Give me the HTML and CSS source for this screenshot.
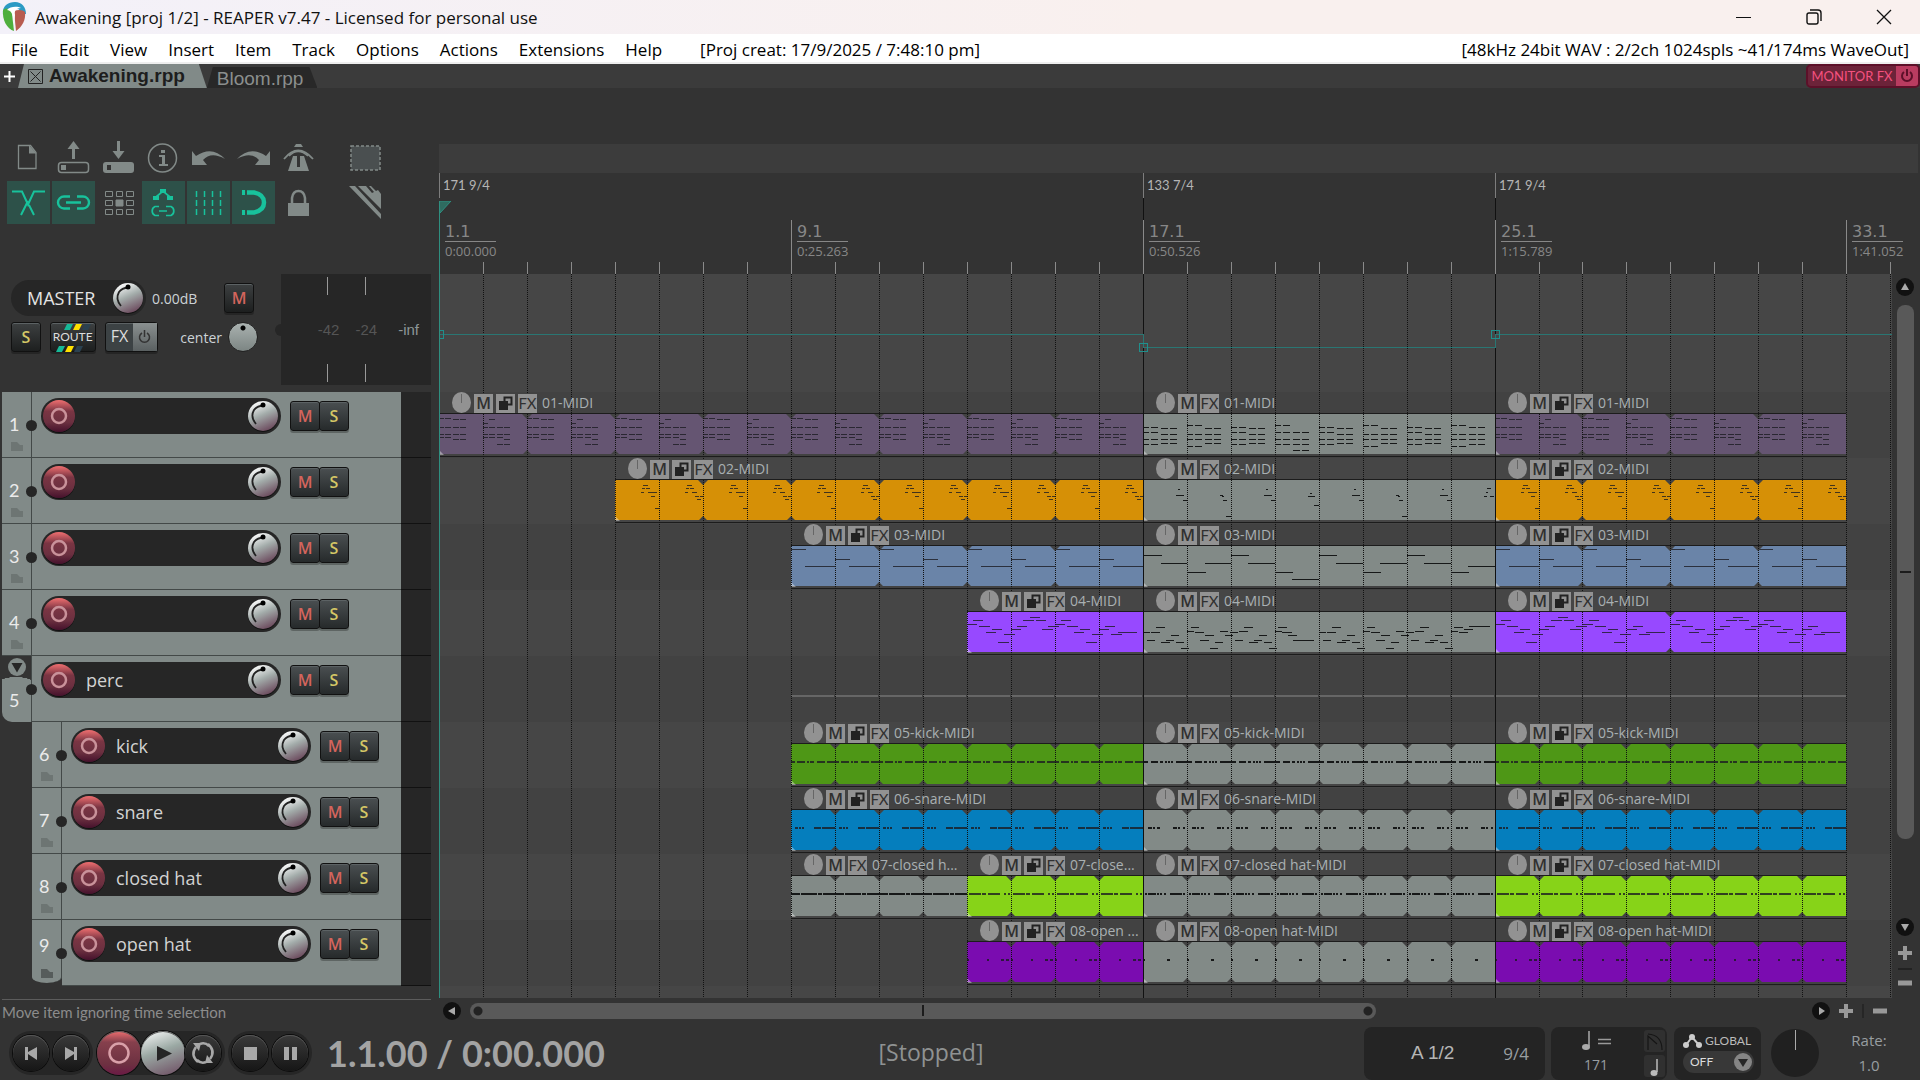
FILE: index.html
```html
<!DOCTYPE html>
<html lang="en">
<head>
<meta charset="utf-8">
<title>Awakening [proj 1/2] - REAPER v7.47</title>
<link rel="stylesheet" href="styles.css">
</head>
<body>
<header class="titlebar">
  <svg class="logo" width="24" height="30" viewBox="0 0 24 30">
    <path d="M1 12C0 4 6 0 13 0c7 0 11 5 11 12l-5 0c0-4-3-6-7-6-5 0-8 3-8 8z" fill="#2b9ac4"/>
    <path d="M1 8c4-3 8-1 9 4l2 17C5 27 0 18 1 8z" fill="#4fae3d"/>
    <path d="M12 9c5-2 9-1 11 1 1 8-3 15-9 19z" fill="#b85c50"/>
    <path d="M5 8c3-4 11-4 14-2-5 0-7 3-6 7l-1 9c-1-8-1-13-7-14z" fill="#fff"/>
  </svg>
  <h1>Awakening [proj 1/2] - REAPER v7.47 - Licensed for personal use</h1>
  <div class="window-buttons">
    <button aria-label="Minimize"><svg width="16" height="16"><path d="M0 8.5h15" stroke="#111"/></svg></button>
    <button aria-label="Restore"><svg width="16" height="16" fill="none" stroke="#111" stroke-width="1.4"><rect x="1" y="4" width="11" height="11" rx="2"/><path d="M4 1h8q3 0 3 3v8"/></svg></button>
    <button aria-label="Close"><svg width="16" height="16"><path d="M1 1l14 14M15 1L1 15" stroke="#111" stroke-width="1.3"/></svg></button>
  </div>
</header>
<nav class="menubar">
  <a href="#">File</a><a href="#">Edit</a><a href="#">View</a><a href="#">Insert</a><a href="#">Item</a><a href="#">Track</a><a href="#">Options</a><a href="#">Actions</a><a href="#">Extensions</a><a href="#">Help</a>
  <span class="created">[Proj creat: 17/9/2025 / 7:48:10 pm]</span>
  <span class="audio">[48kHz 24bit WAV : 2/2ch 1024spls ~41/174ms WaveOut]</span>
</nav>
<div class="tabbar">
  <button class="tab-add" aria-label="New tab"><svg width="11" height="11"><path d="M5.5 0v11M0 5.500h11" stroke="#fff" stroke-width="2"/></svg></button>
  <button class="tab tab-active"><svg width="15" height="15" fill="none" stroke="#222"><path d="M.5.5h14v14H.5zM2.500 2.500l10 10M12.500 2.500l-10 10"/></svg>Awakening.rpp</button>
  <button class="tab">Bloom.rpp</button>
  <button class="monitor-fx"><span>MONITOR FX</span><svg width="22" height="20" fill="none" stroke="#5c1029" stroke-width="2"><path d="M8 6a5 5 0 1 0 6 0M11 3v7"/></svg></button>
</div>
<main>
  <section class="side">
    <div class="toolbar">
      <button aria-label="New project"><svg class="icon"><path d="M11.500 9.500h12l5.500 7v16H11.500z" fill="none" stroke="currentColor" stroke-width="1.300"/><path d="M22 9l7.500 8.500H22z" fill="currentColor"/></svg></button>
      <button aria-label="Open project"><svg class="icon"><path d="M21.500 5l6 8h-4.500v10h-3V13h-4.500z" fill="currentColor"/><rect x="6.500" y="26.500" width="30" height="10" rx="3" fill="none" stroke="currentColor" stroke-width="1.500"/><path d="M9 29h5v5H9z" fill="currentColor"/></svg></button>
      <button aria-label="Save project"><svg class="icon"><path d="M21.500 23l6-8h-4.500V5h-3v10h-4.500z" fill="currentColor"/><rect x="6" y="26" width="31" height="11" rx="3" fill="currentColor"/><path d="M10 29h4v5h-4z" fill="#333"/></svg></button>
      <button aria-label="Project settings"><svg class="icon"><circle cx="20.500" cy="22" r="14" fill="none" stroke="currentColor" stroke-width="1.500"/><path d="M19 14h4v3h-4zM17 19h6v9h3v2h-9v-2h3v-7h-3z" fill="currentColor"/></svg></button>
      <button aria-label="Undo"><svg class="icon"><path d="M5 15l4 5q16-11 29 3-14-8-22 1l4 5H5z" fill="currentColor"/></svg></button>
      <button aria-label="Redo"><svg class="icon"><path d="M38 15l-4 5Q18 9 5 23q14-8 22 1l-4 5h15z" fill="currentColor"/></svg></button>
      <button aria-label="Metronome"><svg class="icon"><path d="M19 8h5l2 3h-9zM16 20h4v11h3V20h4l5 15H11z" fill="currentColor"/><path d="M7 23q14-17 29 0" fill="none" stroke="currentColor" stroke-width="1.800"/><path d="M12 20q9-9 19 0" fill="none" stroke="currentColor" stroke-width="1.500"/></svg></button>
      <button class="apart" aria-label="Marquee"><svg class="icon"><rect x="7" y="10" width="29" height="24" fill="#4a4f50" stroke="currentColor" stroke-width="1.500" stroke-dasharray="3 2"/></svg></button>
      <button class="on" aria-label="Auto crossfade"><svg class="icon"><path d="M5 10.500h10l6 13 6-13h11M21 20L14 34M22 24l5 10" fill="none" stroke="currentColor" stroke-width="2"/></svg></button>
      <button class="on" aria-label="Grouping"><svg class="icon"><path d="M18 15.500h-6a6 6 0 0 0 0 12h6M25 15.500h6a6 6 0 0 1 0 12h-6M14 21.500h15" fill="none" stroke="currentColor" stroke-width="2.400"/></svg></button>
      <button aria-label="Ripple editing"><svg class="icon" fill="none" stroke="currentColor"><path d="M8.500 10.500h7v5h-7zM19.500 10.500h6v5h-6zM29.500 10.500h7v5h-7zM8.500 19.500h7v5h-7zM29.500 19.500h7v5h-7zM8.500 28.500h7v5h-7zM19.500 28.500h6v5h-6zM29.500 28.500h7v5h-7z"/><path d="M19 19h7v6h-7z" fill="currentColor"/></svg></button>
      <button class="on" aria-label="Envelope move"><svg class="icon"><path d="M17 25.500h-4a5 5 0 0 0 0 9h4M24 25.500h5a5 5 0 0 1 0 9h-5M17 30h8M14 16l7-6 7 6" fill="none" stroke="currentColor" stroke-width="1.700"/><path d="M18 8h6v4h-6zM11 15h6v4h-6zM25 15h6v4h-6z" fill="currentColor"/></svg></button>
      <button class="on" aria-label="Grid"><svg class="icon"><path d="M9.500 10v26M17.500 10v26M25.500 10v26M33.500 10v26" stroke="currentColor" stroke-width="1.500" stroke-dasharray="6 3"/></svg></button>
      <button class="on" aria-label="Snap"><svg class="icon"><path d="M15 11.500h7q10 2 10 10t-10 10h-7" fill="none" stroke="currentColor" stroke-width="4.500"/><path d="M10 9h3v5h-3zM10 29h3v5h-3z" fill="currentColor"/></svg></button>
      <button aria-label="Lock"><svg class="icon"><path d="M11 22h21v13H11z" fill="currentColor"/><path d="M15 22v-5q1-7 6.500-7t6.500 7v5" fill="none" stroke="currentColor" stroke-width="2.500"/></svg></button>
      <button class="apart" aria-label="Razor edit"><svg class="icon"><path d="M5 5h6l26 28v5zM14 5h8l6 7 2-1-5-6h2l5 5 2-1 3 4v15z" fill="currentColor"/></svg></button>
    </div>
    <div class="master">
      <div class="master-controls">
        <div class="master-row">
          <div class="master-pill"><span>MASTER</span><input type="range" class="knob" aria-label="Master volume"></div>
          <span class="db">0.00dB</span>
          <button class="key mute push">M</button>
        </div>
        <div class="master-row">
          <button class="key solo">S</button>
          <button class="key route"><svg width="45" height="29"><g><path d="M16 1h6l-3 6h-6z" fill="#16b998"/><path d="M25 1h6l-3 6h-6z" fill="#ffe000"/><path d="M34 1h6l-3 6h-6z" fill="#2b4150"/><path d="M8 23h6l-3 6H5z" fill="#16b998"/><path d="M17 23h6l-3 6h-6z" fill="#ffe000"/><path d="M26 23h6l-3 6h-6z" fill="#2b4150"/></g></svg><span>ROUTE</span></button>
          <button class="key fx"><span>FX</span><svg width="24" height="28" fill="none" stroke="#333" stroke-width="1.500"><path d="M9 10a5 5 0 1 0 5 0M11.500 7v7"/></svg></button>
          <span class="pan-label">center</span>
          <input type="range" class="knob pan" aria-label="Master pan">
        </div>
      </div>
      <div class="meter"><span>-42</span><span>-24</span><span class="inf">-inf</span></div>
    </div>
    <div class="tracks" id="tracks"></div>
    <p class="status">Move item ignoring time selection</p>
  </section>
  <section class="timeline">
    <div class="regions"></div>
    <div class="ruler" id="ruler"></div>
    <div class="arrange-row">
      <div class="arrange" id="arrange">
        <div class="master-lane"></div>
      </div>
      <div class="vscroll">
        <button class="arrow" aria-label="Scroll up"><svg width="18" height="18"><path d="M9 5l4 7H5z" fill="#aaa"/></svg></button>
        <div class="vthumb"></div>
        <button class="arrow" aria-label="Scroll down"><svg width="18" height="18"><path d="M9 13l4-7H5z" fill="#aaa"/></svg></button>
        <button class="zoom" aria-label="Zoom in vertically"><svg width="14" height="14"><path d="M7 0v14M0 7h14" stroke="#999" stroke-width="4"/></svg></button>
        <i></i>
        <button class="zoom" aria-label="Zoom out vertically"><svg width="14" height="6"><path d="M0 3h14" stroke="#999" stroke-width="5"/></svg></button>
      </div>
    </div>
    <div class="hscroll">
      <button class="arrow" aria-label="Scroll left"><svg width="18" height="18"><path d="M5 9l7-4v8z" fill="#aaa"/></svg></button>
      <div class="htrack"><div class="hthumb"></div></div>
      <button class="arrow" aria-label="Scroll right"><svg width="18" height="18"><path d="M13 9L7 5v8z" fill="#aaa"/></svg></button>
      <button class="zoom" aria-label="Zoom in"><svg width="14" height="14"><path d="M7 0v14M0 7h14" stroke="#999" stroke-width="4"/></svg></button>
      <i></i>
      <button class="zoom" aria-label="Zoom out"><svg width="14" height="14"><path d="M0 7h14" stroke="#999" stroke-width="5"/></svg></button>
    </div>
  </section>
</main>
<footer class="transport">
  <div class="group">
    <button class="round" aria-label="Go to start"><svg viewBox="0 0 36 36"><path d="M12 12h3v5l9-5v13l-9-6v6h-3z" fill="#a8a8a8"/></svg></button>
    <button class="round" aria-label="Go to end"><svg viewBox="0 0 36 36"><path d="M24 12h-3v5l-9-5v13l9-6v6h3z" fill="#a8a8a8"/></svg></button>
  </div>
  <div class="group middle">
    <button class="round big record" aria-label="Record"><svg viewBox="0 0 44 44"><circle cx="22" cy="22" r="9.500" fill="none" stroke="#d9a0a9" stroke-width="2.500"/></svg></button>
    <button class="round big play" aria-label="Play"><svg viewBox="0 0 44 44"><path d="M16 15l15 7.500L16 30z" fill="#262626"/></svg></button>
    <button class="round" aria-label="Repeat"><svg viewBox="0 0 36 36"><path d="M11 12q-6 8 2 15M25 24q6-8-2-15M15 9q5-2 9 2M21 27q-5 2-9-2" fill="none" stroke="#a8a8a8" stroke-width="2.500"/><path d="M8 8h8l-2 8zM28 28h-8l2-8z" fill="#a8a8a8"/></svg></button>
  </div>
  <div class="group">
    <button class="round" aria-label="Stop"><svg viewBox="0 0 36 36"><path d="M12 12h13v13H12z" fill="#a8a8a8"/></svg></button>
    <button class="round" aria-label="Pause"><svg viewBox="0 0 36 36"><path d="M12 12h5v13h-5zM20 12h5v13h-5z" fill="#a8a8a8"/></svg></button>
  </div>
  <span class="time">1.1.00 / 0:00.000</span>
  <span class="state">[Stopped]</span>
  <div class="panels">
    <div class="selection"><span class="sel">A 1/2</span><span class="sig">9/4</span></div>
    <div class="tempo">
      <div class="tempo-value">
        <svg width="30" height="22"><path d="M8 1v15" stroke="#aaa" stroke-width="1.500"/><ellipse cx="5" cy="17" rx="4" ry="3" fill="#aaa"/><path d="M17 9.500h13M17 13.500h13" stroke="#999" stroke-width="1.500"/></svg>
        <span>171</span>
      </div>
      <div class="tempo-keys">
        <button aria-label="Tap"><svg width="21" height="22" fill="none" stroke="#151515" stroke-width="1.200"><path d="M4 20V6l9 8M4 4q14 1 14 16"/></svg></button>
        <button aria-label="Note"><svg width="21" height="22"><path d="M13 4v13" stroke="#bbb" stroke-width="1.500"/><ellipse cx="10" cy="18" rx="3.500" ry="3" fill="#bbb"/></svg></button>
      </div>
    </div>
    <div class="global">
      <div class="global-head"><svg width="20" height="14"><path d="M3 11l6-8 7 8" fill="none" stroke="#ccc" stroke-width="2"/><circle cx="3" cy="11" r="3" fill="#ccc"/><circle cx="9" cy="3" r="3" fill="#ccc"/><circle cx="16" cy="11" r="3" fill="#ccc"/></svg><span>GLOBAL</span></div>
      <button class="off"><span>OFF</span><svg width="18" height="18"><circle cx="9" cy="9" r="9" fill="#858585"/><path d="M4 6h10l-5 8z" fill="#262626"/></svg></button>
    </div>
    <div class="dial"></div>
    <div class="rate"><span>Rate:</span><span>1.0</span></div>
  </div>
</footer>
<script src="script.js"></script>
</body>
</html>
```
FILE: styles.css
```css
* { box-sizing: border-box; }
body {
  margin: 0;
  min-height: 100vh;
  display: flex;
  flex-direction: column;
  background: #333;
  color: #d0d0d0;
  font-family: "Open Sans", "Noto Sans", sans-serif;
  font-size: 14px;
  overflow: hidden;
}
button { border: 0; padding: 0; margin: 0; background: none; color: inherit; font: inherit; }
svg { display: block; }

/* Title, menu and project tabs */
.titlebar { display: flex; align-items: center; height: 34px; padding: 0 28px 0 2px; gap: 9px; background: linear-gradient(90deg, #f3f1f9, #f9f0ee 60%); color: #111; }
.titlebar h1 { margin: 0; font-size: 17px; font-weight: 400; white-space: nowrap; }
.window-buttons { display: flex; gap: 54px; margin-left: auto; }
.menubar { display: flex; align-items: center; height: 30px; padding: 2px 11px 0; gap: 21px; background: #fff; border-bottom: 2px solid #eee; color: #000; font-size: 17px; white-space: nowrap; }
.menubar a { color: inherit; text-decoration: none; }
.created { margin-left: 17px; }
.audio { margin-left: auto; }
.tabbar { display: flex; align-items: flex-end; height: 24px; background: #3b3b3b; }
.tab-add { align-self: center; margin: 0 3px 0 4px; }
.tab { height: 21px; padding: 0 14px 0 10px; background: #282828; color: #8b8f8e; font: 19px/24px "Liberation Sans", Arial, sans-serif; clip-path: polygon(6px 0, calc(100% - 8px) 0, 100% 100%, 0 100%); overflow: hidden; }
.tab-active { display: flex; align-items: center; gap: 6px; height: 24px; padding-right: 22px; background: #818a88; color: #1d1d1d; font-weight: 700; }
.monitor-fx { display: flex; align-items: center; margin-left: auto; width: 114px; height: 24px; border: 2px solid #5c1029; border-radius: 5px; background: #6c2339; color: #f5517f; font: 13px/20px Lato, sans-serif; white-space: nowrap; overflow: hidden; }
.monitor-fx span { flex: 1; text-align: center; }
.monitor-fx svg { background: #b93c60; }

main { display: flex; flex: 1; min-height: 0; }
.side { display: flex; flex-direction: column; width: 439px; padding-top: 48px; }

.toolbar { display: grid; grid-template-columns: repeat(7, 43px) 67px; gap: 2px; height: 88px; padding-left: 7px; margin-bottom: 50px; color: #828a88; }
.toolbar button { height: 43px; }
.toolbar .apart { padding-left: 22px; }
.toolbar .on { background: #2d5149; color: #18c29c; }
.icon { width: 43px; height: 43px; }

/* Master strip */
.master { display: flex; justify-content: space-between; height: 118px; margin-right: 8px; }
.master-controls { width: 262px; padding: 6px 4px 0 11px; }
.master-row { display: flex; align-items: center; height: 36px; margin-bottom: 3px; }
.master-pill { display: flex; align-items: center; width: 135px; height: 36px; padding: 0 2px 0 16px; border-radius: 18px; background: #262626; color: #e4e4e4; font-size: 18px; }
.master-pill .knob { margin-left: auto; }
.db { margin-left: 6px; color: #ccd2d6; }
.push { margin-left: auto; margin-right: 4px; }
.pan-label { margin-left: 22px; margin-right: 6px; color: #ccd2d6; }
.meter { display: flex; align-items: center; justify-content: flex-end; width: 150px; height: 111px; gap: 16px; padding-right: 12px; font: 15px/20px "Liberation Sans", Arial, sans-serif; color: #555;
  background: linear-gradient(#999, #999) 46px 3px / 1px 18px no-repeat,
    linear-gradient(#999, #999) 84px 3px / 1px 18px no-repeat,
    linear-gradient(#999, #999) 46px 90px / 1px 18px no-repeat,
    linear-gradient(#999, #999) 84px 90px / 1px 18px no-repeat, #262626; }
.meter::before { content: ""; align-self: center; width: 6px; height: 12px; margin: 0 auto 0 -6px; border-radius: 6px 0 0 6px; background: #262626; }
.meter .inf { margin-left: 5px; color: #8d9698; }

.key { width: 30px; height: 30px; border: 1px solid #111; border-radius: 3px; background: linear-gradient(#4a4f51, #262a2b); box-shadow: inset 0 1px #5c6264, 0 2px #0004; font-size: 16px; font-weight: 600; line-height: 26px; text-align: center; }
.mute { color: #d4645c; }
.solo { color: #d5c766; }
.master .key { background: linear-gradient(#3d4041, #1d1f1f); }
.master .route { position: relative; width: 46px; margin: 0 9px; color: #ddd; font: 15px/28px Lato, sans-serif; }
.route svg { position: absolute; left: 0; top: 0; }
.route span { position: relative; display: block; margin: 0 -4px; font-size: 12px; }
.master .fx { display: flex; width: 54px; color: #ddd; font-weight: 400; background: #3c4244; }
.fx span { flex: 1; font-size: 16px; }
.fx svg { background: linear-gradient(#8a9090, #5a6061); }

.knob { appearance: none; flex: none; width: 32px; height: 32px; margin: 0; background: url("data:image/svg+xml,%3Csvg xmlns='http://www.w3.org/2000/svg' viewBox='0 0 32 32'%3E%3Cdefs%3E%3ClinearGradient id='g' x1='.3' y1='0' x2='.75' y2='1'%3E%3Cstop offset='0' stop-color='%23fff'/%3E%3Cstop offset='.45' stop-color='%23a3acaa'/%3E%3Cstop offset='1' stop-color='%23674257'/%3E%3C/linearGradient%3E%3C/defs%3E%3Ccircle cx='16' cy='17' r='15' fill='%23111'/%3E%3Ccircle cx='16' cy='16' r='15' fill='url(%23g)'/%3E%3Cpath d='M9 24Q3 17 7 10Q10 6 16 5.500' fill='none' stroke='%23222' stroke-width='1.800'/%3E%3Ccircle cx='16' cy='5' r='2.500'/%3E%3C/svg%3E"); }
.knob::-webkit-slider-thumb { appearance: none; width: 0; height: 0; }
.pan { width: 30px; height: 30px; border: 1px solid #222; border-radius: 50%; background: radial-gradient(circle at 14px 5px, #000 2px, transparent 3px), linear-gradient(#aab2b0, #7c8583); }

/* Track panel */
.tracks { margin: 0 8px 13px 2px; background: linear-gradient(#262626, #262626) right / 30px 100% no-repeat; }
.track { display: flex; height: 66px; padding-right: 30px; background: linear-gradient(#111, #111) right bottom / 30px 1px no-repeat; }
.track.child { padding-left: 30px; }
.track-index { position: relative; display: flex; flex-direction: column; width: 30px; padding: 20px 0 0 7px; border-right: 1px solid #434948; border-bottom: 1px solid #434948; background: #818a88; color: #ebebeb; font: 18px/24px Lato, sans-serif; }
.track-index::after { content: ""; position: absolute; right: -6px; top: 28px; width: 11px; height: 11px; border-radius: 50%; background: #262626; }
.track-index svg { margin: 6px 0 0 2px; }
.folder .track-index { padding-top: 0; background: radial-gradient(ellipse 22px 10px at 14px 31px, #818a88 99%, transparent), linear-gradient(#818a88, #818a88) 0 28px / 100% 40px no-repeat; border-bottom: 0; border-radius: 0 0 0 10px; }
.folder .track-index svg { margin: 1px 0 11px -1px; }
.last .track-index { height: 63px; padding-top: 13px; border-bottom: 0; border-radius: 0 0 15px 15px / 0 0 6px 6px; }
.last .track-index svg { margin-top: 12px; }
.track-main { display: flex; flex: 1; padding: 6px 0 0 9px; border-bottom: 1px solid #434948; background: #818a88; }
.track-pill { display: flex; align-items: center; width: 240px; height: 36px; padding: 0 2px; border-radius: 18px; background: #262626; }
.track-pill input[type="text"] { flex: 1; min-width: 0; margin-left: 11px; padding: 0; border: 0; background: none; color: #d2d2d2; font: 18px/24px "Open Sans", sans-serif; }
.arm { width: 32px; height: 32px; border-radius: 50%; background: linear-gradient(#f06f70, #7a3543 35%, #6b3040 70%, #45112c); box-shadow: 0 1px #111; }
.arm svg { margin: auto; }
.track .key { margin-top: 3px; }
.track-pill + .key { margin-left: 9px; }
.track .key + .key { margin-left: -1px; }
.status { height: 24px; margin: 0 8px 0 2px; border-top: 1px solid #5c5c5c; color: #8c8c8c; font: 15px/24px Lato, sans-serif; }

/* Timeline */
.timeline { display: flex; flex: 1; flex-direction: column; min-width: 0; padding-top: 56px; }
.regions { height: 29px; margin-right: 2px; background: #3c3c3c; }
.ruler { position: relative; height: 101px; overflow: hidden; }
.tempo-mark, .bar-mark, .tick { position: absolute; }
.tempo-mark { top: 0; height: 25px; padding-left: 3px; border-left: 1px solid #7d7d7d; color: #b5b5b5; font: 13px/25px Lato, sans-serif; white-space: nowrap; }
.bar-mark { top: 47px; height: 54px; padding: 3px 0 0 5px; border-left: 1px solid #8a8a8a; color: #878787; }
.bar-mark b { display: block; border-bottom: 1px solid #878787; font: 16px/18px "DejaVu Sans", sans-serif; }
.bar-mark span { display: block; font-size: 13px; line-height: 18px; }
.tick { bottom: 0; width: 1px; height: 12px; background: #8a8a8a; }
.cursor-head { position: absolute; left: 0; top: 28px; }
.join { position: absolute; top: 25px; width: 1px; height: 22px; background: #111; }
.arrange-row { display: flex; flex: 1; min-height: 0; }
.arrange { position: relative; flex: 1; min-width: 0; overflow: hidden; background: #464646; }
.master-lane { height: 118px; }
.lane { position: relative; height: 66px; }
.lane:nth-child(even) { background: #424242; }
.grid { position: absolute; left: 0; top: 0; z-index: 1; width: 100%; height: 100%; shape-rendering: crispEdges; }
.item { position: absolute; top: 0; height: 65px; border-bottom: 1px solid #1c1c1c; }
.item-head { position: relative; z-index: 2; display: flex; align-items: flex-end; gap: 3px; height: 21px; padding-left: 13px; color: #a9b0b2; white-space: nowrap; overflow: hidden; }
.item-head span { margin-left: 2px; line-height: 21px; }
.item-head button { width: 19px; height: 19px; background: #929292; color: #303030; font-size: 16px; line-height: 19px; font-weight: 600; text-align: center; }
.item-head .item-knob { height: 21px; border-radius: 50%; background: linear-gradient(#666, #666) 9px 2px / 1px 9px no-repeat, #929292; }
.item-head .item-fx { font-family: Lato, sans-serif; font-weight: 400; font-size: 15px; }
.item-body { border-top: 1px solid #1c1c1c; }

.vscroll { display: flex; flex-direction: column; align-items: center; width: 28px; padding: 4px 2px 0 0; }
.arrow { flex: none; width: 18px; height: 18px; border-radius: 50%; background: #111; }
.vthumb { width: 17px; height: 534px; margin: 9px 0 79px; border-radius: 8px; background: linear-gradient(#1c1c1c, #1c1c1c) center / 11px 2px no-repeat, #595959; }
.vscroll .zoom { margin-top: 10px; }
.vscroll i { width: 14px; height: 2px; margin-top: 8px; background: #222; }
.hscroll { display: flex; align-items: center; height: 25px; padding: 0 33px 0 4px; gap: 9px; }
.htrack { flex: 1; }
.hthumb { width: 68%; height: 16px; border-radius: 8px; background: radial-gradient(circle at 8px 8px, #222 4px, transparent 5px), radial-gradient(circle at calc(100% - 8px) 8px, #222 4px, transparent 5px), linear-gradient(#1c1c1c, #1c1c1c) center / 2px 11px no-repeat, #595959; }
.hscroll i { width: 2px; height: 14px; background: #262626; }

/* Transport */
.transport { display: flex; align-items: center; height: 57px; padding: 3px 29px 0 9px; }
.group { display: flex; align-items: center; gap: 4px; height: 44px; padding: 0 4px; border-radius: 22px; background: #262626; }
.group.middle { gap: 0; margin: 0 3px 0 4px; padding: 0 4px 0 0; }
.round { width: 36px; height: 36px; border-radius: 50%; background: linear-gradient(#3a3a3a, #161616); box-shadow: 0 0 0 1px #0c0c0c, inset 0 1px #555; }
.big { width: 44px; height: 44px; }
.record { background: linear-gradient(#f06f70, #86404d 25%, #6d3141 75%, #6b1a45); }
.play { background: linear-gradient(160deg, #fff, #9aa8a3 45%, #6c4a60); }
.time { width: 275px; margin-left: 15px; color: #a3a3a3; font: 700 36px/44px Lato, sans-serif; white-space: nowrap; }
.state { flex: 1; margin-right: 104px; text-align: center; color: #8f9292; font-size: 23px; line-height: 28px; padding-bottom: 3px; }
.panels { display: flex; align-items: center; gap: 6px; }
.selection, .tempo, .global { height: 53px; border-radius: 8px; background: #242424; }
.selection { display: flex; align-items: center; justify-content: space-between; width: 181px; padding: 0 16px 0 47px; color: #989ea1; font-size: 17px; }
.selection .sel { color: #b5b5b5; font: 19px/26px "Liberation Sans", Arial, sans-serif; }
.tempo { display: flex; justify-content: flex-end; width: 116px; padding: 3px 2px 3px 0; gap: 32px; }
.tempo-value { display: flex; flex-direction: column; align-items: center; width: 32px; gap: 2px; color: #989ea1; font-size: 14px; line-height: 22px; }
.tempo-keys { display: flex; flex-direction: column; gap: 3px; }
.tempo-keys button { height: 22px; background: #303030; border-radius: 3px; }
.global { width: 87px; margin-left: 1px; padding: 4px 7px 0 9px; color: #bbb; font: 12px/20px Lato, sans-serif; }
.global-head { display: flex; align-items: center; gap: 2px; }
.off { display: flex; align-items: center; justify-content: space-between; width: 71px; height: 22px; padding: 0 2px 0 7px; border-radius: 11px; background: #383838; color: #ddd; font-size: 12px; }
.dial { width: 48px; height: 48px; margin: 0 22px 0 4px; border-radius: 50%; background: linear-gradient(#aaa, #aaa) center 1px / 1px 20px no-repeat, #202020; }
.rate { display: flex; flex-direction: column; align-items: center; width: 44px; color: #989ea1; line-height: 25px; font-size: 15px; }
```
FILE: script.js
```js
// Horizontal position of a measure, in pixels from the start of the arrange view.
const at = measure => Math.round(measure * 43.98);

const GREY = '#828a87';

// Shifts a list of [x, y, width] notes to the right.
const shift = (notes, dx) => notes.map(([x, y, w]) => [x + dx, y, w]);
// Builds a chord grid: each column is [x, width], each row list applies to it.
const chords = (cols, rows) => cols.flatMap(([x, w]) => rows.map(y => [x, y, w]));
// One line of drum hits.
const hits = list => list.map(([x, w]) => [x, 17, w]);

const c12 = [[0, 6], [8, 7]], c34 = [[18, 7], [27, 7]];
const gA = [...chords(c12, [13, 18, 25, 30]), ...chords(c34, [14, 20, 25, 29])];
const gB = [...chords(c12, [11, 20, 25, 32]), ...chords(c34, [14, 20, 25, 29])];
const gC = [...chords(c12, [11, 18, 25, 30]), ...chords(c34, [18, 25, 30, 36])];
const gD = [...chords(c12, [11, 20, 25, 32]), ...chords(c34, [13, 20, 25, 30])];
const mA = [[35, 9, 2], [33, 15, 8], [40, 20, 4]];
const mB = [[33, 15, 3], [35, 16, 2], [36, 20, 4], [39, 36, 5]];
const mC = [[35, 13, 2], [33, 16, 7], [39, 25, 5]];
const mD = [[36, 8, 4], [35, 12, 2], [33, 16, 3], [39, 16, 4]];
const arpStart = [[13, 15, 9], [0, 20, 7], [8, 20, 9], [4, 28, 8], [18, 30, 9], [23, 28, 8], [28, 23, 8], [33, 30, 8], [38, 36, 8],
  [44, 19, 7], [48, 15, 8], [52, 20, 9], [62, 23, 9], [57, 28, 9], [67, 36, 8], [72, 30, 8], [77, 19, 8], [82, 23, 8],
  [87, 20, 8], [101, 15, 9], [96, 19, 9], [92, 28, 8], [106, 30, 9], [111, 28, 8], [116, 23, 8], [121, 30, 8], [126, 36, 8]];

const patterns = {
  keys: { loop: 2, notes: [
    [0, 4, 5], [6, 4, 6], [14, 5, 6], [21, 5, 6],
    ...chords([[0, 5], [6, 6], [14, 6], [21, 6]], [13, 20]), [0, 23, 5], [6, 23, 6], [14, 25, 6], [21, 25, 6],
    [50, 5, 6], [44, 9, 5], ...chords([[44, 5], [50, 6], [58, 6], [65, 6]], [13, 20]),
    [44, 23, 5], [50, 23, 6], [58, 23, 6], [65, 25, 6], [58, 30, 6], [65, 30, 6]] },
  keysAlt: { loop: 8, notes: [gA, gB, gA, gC, gA, gB, gA, gD].flatMap((n, i) => shift(n, i * 44)) },
  lead: { loop: 2, notes: [
    [28, 5, 5], [27, 8, 3], [31, 8, 4], [26, 12, 3], [33, 12, 5], [38, 12, 4], [36, 16, 4], [40, 28, 4],
    [72, 5, 5], [71, 8, 3], [75, 8, 4], [70, 12, 3], [77, 12, 5], [80, 16, 4], [85, 16, 3], [82, 19, 4]] },
  leadAlt: { loop: 8, notes: [mA, mB, mA, mC, mA, mB, mA, mD].flatMap((n, i) => shift(n, i * 44)) },
  bass: { loop: 2, notes: [[0, 3, 15], [14, 20, 30], [44, 13, 15], [58, 20, 30]] },
  bassAlt: { loop: 8, notes: [
    [0, 9, 19], [18, 17, 26], [44, 26, 19], [62, 17, 26], [88, 9, 18], [105, 17, 27], [132, 26, 18], [149, 33, 27],
    [176, 9, 18], [193, 17, 27], [220, 26, 18], [237, 17, 27], [264, 9, 18], [281, 17, 27], [308, 26, 18], [325, 20, 27]] },
  arp: { loop: 4, notes: [
    [6, 8, 10], [0, 12, 10], [12, 14, 11], [19, 20, 10], [25, 17, 10], [31, 30, 11], [37, 22, 11], [44, 17, 10], [50, 14, 10],
    [56, 8, 11], [63, 5, 10], [69, 8, 10], [75, 17, 11], [81, 14, 11], [88, 12, 10], [94, 8, 10], [100, 14, 11], [107, 20, 10],
    [113, 17, 10], [119, 30, 11], [125, 22, 11], [132, 17, 10], [138, 14, 10], [144, 22, 11], [151, 20, 19]] },
  arpAlt: { loop: 8, notes: [
    ...arpStart, [132, 19, 7], [135, 15, 9], [139, 20, 10], [145, 23, 9], [150, 28, 21],
    ...shift(arpStart, 176), [308, 19, 7], [311, 15, 9], [316, 20, 9], [321, 17, 9], [326, 14, 21]] },
  kick: { loop: 1, tall: 2, notes: hits([[0, 4], [6, 8], [16, 2], [19, 4], [26, 8], [36, 8]]) },
  kickAlt: { loop: 1, tall: 2, notes: hits([[0, 5], [8, 7], [17, 3], [22, 2], [25, 2], [28, 2], [33, 11]]) },
  snare: { loop: 1, tall: 2, notes: hits([[4, 3], [8, 2], [11, 2], [23, 7], [31, 13]]) },
  snareAlt: { loop: 1, tall: 2, notes: hits([[5, 4], [10, 2], [14, 3], [30, 4], [35, 2], [40, 2]]) },
  hatIntro: { loop: 1, tall: 2, notes: hits([[0, 9], [10, 16], [27, 4], [32, 12]]) },
  hat: { loop: 1, tall: 2, notes: hits([[2, 12], [15, 4], [21, 12], [37, 2], [41, 2]]) },
  hatAlt: { loop: 1, tall: 2, notes: hits([[2, 2], [5, 8], [14, 2], [17, 2], [21, 2], [27, 12], [40, 2]]) },
  open: { loop: 1, tall: 2, notes: hits([[0, 2], [20, 2], [34, 3], [39, 3]]) },
  openAlt: { loop: 1, tall: 2, notes: hits([[0, 2], [24, 3]]) }
};

// Items: [first measure, length, pattern, colour, label]
const tracks = [
  { name: '', items: [[0, 16, 'keys', '#655572', '01-MIDI'], [16, 8, 'keysAlt', GREY, '01-MIDI'], [24, 8, 'keys', '#655572', '01-MIDI']] },
  { name: '', items: [[4, 12, 'lead', '#d69006', '02-MIDI'], [16, 8, 'leadAlt', GREY, '02-MIDI'], [24, 8, 'lead', '#d69006', '02-MIDI']] },
  { name: '', items: [[8, 8, 'bass', '#6a84a8', '03-MIDI'], [16, 8, 'bassAlt', GREY, '03-MIDI'], [24, 8, 'bass', '#6a84a8', '03-MIDI']] },
  { name: '', items: [[12, 4, 'arp', '#9749ff', '04-MIDI'], [16, 8, 'arpAlt', GREY, '04-MIDI'], [24, 8, 'arp', '#9749ff', '04-MIDI']] },
  { name: 'perc', kind: 'folder', items: [] },
  { name: 'kick', kind: 'child', items: [[8, 8, 'kick', '#4e9716', '05-kick-MIDI'], [16, 8, 'kickAlt', GREY, '05-kick-MIDI'], [24, 8, 'kick', '#4e9716', '05-kick-MIDI']] },
  { name: 'snare', kind: 'child', items: [[8, 8, 'snare', '#057ebd', '06-snare-MIDI'], [16, 8, 'snareAlt', GREY, '06-snare-MIDI'], [24, 8, 'snare', '#057ebd', '06-snare-MIDI']] },
  { name: 'closed hat', kind: 'child', items: [[8, 4, 'hatIntro', GREY, '07-closed h...'], [12, 4, 'hat', '#87d318', '07-close...'], [16, 8, 'hatAlt', GREY, '07-closed hat-MIDI'], [24, 8, 'hat', '#87d318', '07-closed hat-MIDI']] },
  { name: 'open hat', kind: 'child last', items: [[12, 4, 'open', '#7a0cb0', '08-open ...'], [16, 8, 'openAlt', GREY, '08-open hat-MIDI'], [24, 8, 'open', '#7a0cb0', '08-open hat-MIDI']] }
];

function trackRow(track, i) {
  const kind = track.kind || '';
  const folder = `<svg width="12" height="9"><path d="M0 0h6l3 3h3v6H0z" fill="${kind.includes('last') ? '#565c5b' : '#6d7573'}"/></svg>`;
  const fold = '<svg width="18" height="20"><circle cx="9" cy="10" r="9" fill="#818a88"/><path d="M3.500 6h11L9 15.500z" fill="#262626"/></svg>';
  const index = kind === 'folder' ? `${fold}${i + 1}` : `${i + 1}${folder}`;
  return `<div class="track ${kind}">
    <div class="track-index">${index}</div>
    <div class="track-main">
      <div class="track-pill">
        <button class="arm" aria-label="Record arm"><svg width="18" height="18"><circle cx="9" cy="9" r="7" fill="none" stroke="#c9929a" stroke-width="2.500"/></svg></button>
        <input type="text" value="${track.name}" aria-label="Track ${i + 1} name">
        <input type="range" class="knob" aria-label="Track ${i + 1} volume">
      </div>
      <button class="key mute">M</button><button class="key solo">S</button>
    </div>
  </div>`;
}

function itemBlock([start, length, name, colour, label]) {
  const pattern = patterns[name];
  const left = at(start), width = at(start + length) - left;
  const ink = colour === GREY ? '#161818' : '#1c1c22';
  let notes = '', notches = '';
  for (let m = 0; m < length; m += pattern.loop) {
    const x0 = at(start + m) - left;
    for (const [x, y, w] of pattern.notes) notes += `M${x0 + x} ${y}h${w}v${pattern.tall || 1}h${-w}z`;
    if (m) notches += `M${x0 - 5} 0h10l-5 5zM${x0 - 5} 41l5-5 5 5z`;
  }
  const copy = colour === GREY ? '' : '<button aria-label="Pooled"><svg width="19" height="19"><path d="M8.500 3.500h7v7h-7z" fill="none" stroke="#222" stroke-width="2"/><path d="M3 7h9v9H3z" fill="#222"/></svg></button>';
  return `<div class="item" style="left:${left}px;width:${width}px">
    <div class="item-head"><button class="item-knob" aria-label="Item volume"></button><button>M</button>${copy}<button class="item-fx">FX</button><span>${label}</span></div>
    <svg class="item-body" width="${width}" height="42">
      <path d="M0 0h${width}v40H0z" fill="${colour}"/>
      <path d="${notes}" fill="${ink}" fill-opacity="${colour === GREY ? 1 : .8}" shape-rendering="crispEdges"/>
      <path d="${notches}" fill="#424242"/>
      <path d="M0 36l5 5H0z" fill="#fff" fill-opacity=".4"/>
    </svg>
  </div>`;
}

document.getElementById('tracks').innerHTML = tracks.map(trackRow).join('');

const lanes = tracks.map(t => `<div class="lane">${t.items.map(itemBlock).join('')}</div>`).join('');
let dotted = '', ticks = '';
for (let m = 1; m <= 33; m++) {
  if (m !== 16 && m !== 24) dotted += `M${at(m)}.5 0V900`;
  ticks += `<i class="tick" style="left:${at(m)}px"></i>`;
}
const a = at(16), b = at(24);
const overlay = `<svg class="grid" fill="none">
  <path d="M${at(8)} 422h${at(24)}" stroke="#666" stroke-width="2" stroke-dasharray="43 1"/>
  <path d="${dotted}" stroke="#111" stroke-dasharray="1 1"/>
  <path d="M${a}.5 0V900M${b}.5 0V900" stroke="#111"/>
  <path d="M0 60.500H${a}.5V73.500H${b}.5V60.500H1500" stroke="#2a7673"/>
  <path d="M-4 56.500h8v8h-8zM${a - 4}.5 69.500h8v8h-8zM${b - 4}.5 56.500h8v8h-8z" stroke="#1f8f8c"/>
  <path d="M.5 0V900" stroke="#2f8f80"/>
</svg>`;
document.getElementById('arrange').insertAdjacentHTML('beforeend', lanes + overlay);

const bars = [[0, '1.1', '0:00.000'], [8, '9.1', '0:25.263'], [16, '17.1', '0:50.526'], [24, '25.1', '1:15.789'], [32, '33.1', '1:41.052']];
const tempos = [[0, '171 9/4'], [16, '133 7/4'], [24, '171 9/4']];
document.getElementById('ruler').innerHTML =
  tempos.map(([m, text]) => `<span class="tempo-mark" style="left:${at(m)}px">${text}</span>`).join('') +
  bars.map(([m, bar, time]) => `<div class="bar-mark" style="left:${at(m)}px"><b>${bar}</b><span>${time}</span></div>`).join('') +
  ticks + `<i class="join" style="left:${a}px"></i><i class="join" style="left:${b}px"></i>` +
  '<svg class="cursor-head" width="13" height="73"><path d="M0 0h12L1 12z" fill="#2f6b60" stroke="#2f8f80"/><path d="M.5 0v73" stroke="#2f8f80"/></svg>';
```
